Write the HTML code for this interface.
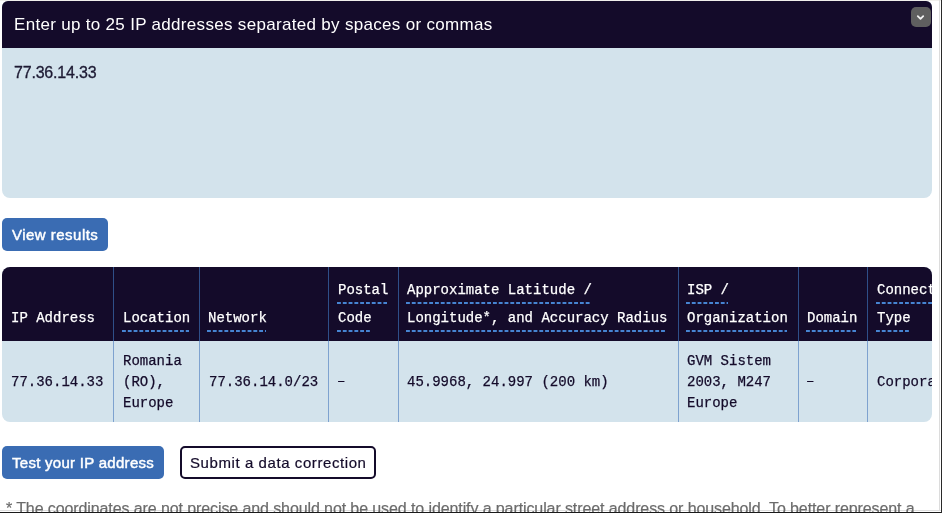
<!DOCTYPE html>
<html><head><meta charset="utf-8">
<style>
html,body{margin:0;padding:0;background:#fff;width:942px;height:513px;overflow:hidden;position:relative;}
body{font-family:"Liberation Sans",sans-serif;-webkit-font-smoothing:antialiased;}
.abs{position:absolute;}
#topline{left:0;top:0;width:942px;height:1px;background:#f0efeb;}
#rline1{z-index:3;left:939px;top:0;width:1px;height:511px;background:#dcdcdc;}
#rline2{z-index:3;left:941px;top:0;width:1px;height:513px;background:#2a2a2a;}
#bline1{left:0;top:510px;width:942px;height:1px;background:#dedede;}
#bline2{z-index:3;left:0;top:512px;width:942px;height:1px;background:#1a1a1a;}

#panel{left:2px;top:1px;width:930px;height:197px;border-radius:6px 6px 8px 8px;overflow:hidden;background:#d3e3ec;}
#phead{left:0;top:0;width:930px;height:47px;background:#140b2a;}
#phead .t{position:absolute;left:12px;top:14px;font-size:17px;letter-spacing:0.31px;line-height:20px;color:#fff;white-space:nowrap;}
#chev{left:909px;top:6px;width:20px;height:20px;border-radius:5px;background:#5f5f5f;}
#ptext{left:12px;top:62px;font-size:16px;letter-spacing:-0.2px;-webkit-text-stroke:0.3px currentColor;line-height:20px;color:#1d1a33;white-space:nowrap;}

.btn{position:absolute;height:33px;border-radius:5px;background:#3a6cb3;color:#fff;font-size:15px;line-height:33px;white-space:nowrap;box-sizing:border-box;}
#b1{left:2px;top:218px;width:106px;letter-spacing:0.48px;}
#b2{left:2px;top:446px;width:162px;letter-spacing:0.28px;}
#b3{left:180px;top:446px;width:196px;height:33px;letter-spacing:0.58px;background:#fff;border:2px solid #140b2a;color:#140b2a;border-radius:5px;}
.btn span{position:absolute;left:10px;top:0;-webkit-text-stroke:0.45px currentColor;}

#tbl{left:2px;top:267px;width:930px;height:155px;border-radius:8px;overflow:hidden;background:#d3e3ec;}
#thead{left:0;top:0;width:930px;height:74px;background:#140b2a;}
.vl{position:absolute;top:0;width:1px;height:155px;}
.vl .h{position:absolute;left:0;top:0;width:1px;height:74px;background:#2f4f88;}
.vl .b{position:absolute;left:0;top:74px;width:1px;height:81px;background:#7ea2cf;}
.m{position:absolute;font-family:"Liberation Mono",monospace;font-size:14px;white-space:nowrap;-webkit-text-stroke:0.25px currentColor;}
.hd{color:#fff;line-height:28px;}
.hd u{text-decoration:none;position:relative;}
.hd u::after{content:'';position:absolute;left:-1px;right:1px;top:20px;height:2px;background-image:linear-gradient(90deg,#4684d2 60%,transparent 60%);background-size:5.8px 2px;background-repeat:repeat-x;}
.bd{color:#140b2a;line-height:21px;}
#foot{left:6px;top:499px;font-size:16px;letter-spacing:-0.1px;-webkit-text-stroke:0.2px currentColor;z-index:2;line-height:20px;color:#6b6b6b;white-space:nowrap;}
</style></head>
<body><div style="position:absolute;left:0;top:0;width:942px;height:513px;will-change:transform">
<div id="panel" class="abs">
  <div id="phead" class="abs"><div class="t">Enter up to 25 IP addresses separated by spaces or commas</div>
  <div id="chev" class="abs"><svg width="20" height="20" viewBox="0 0 20 20"><path d="M6.8 9.1 L9.5 11.8 L12.2 9.1" fill="none" stroke="#f2f2f2" stroke-width="1.8" stroke-linecap="round" stroke-linejoin="round"/></svg></div>
  </div>
  <div id="ptext" class="abs">77.36.14.33</div>
</div>

<div id="b1" class="btn"><span>View results</span></div>

<div id="tbl" class="abs">
  <div id="thead" class="abs"></div>
  <div class="vl" style="left:111px"><div class="h"></div><div class="b"></div></div>
  <div class="vl" style="left:197px"><div class="h"></div><div class="b"></div></div>
  <div class="vl" style="left:326px"><div class="h"></div><div class="b"></div></div>
  <div class="vl" style="left:396px"><div class="h"></div><div class="b"></div></div>
  <div class="vl" style="left:676px"><div class="h"></div><div class="b"></div></div>
  <div class="vl" style="left:796px"><div class="h"></div><div class="b"></div></div>
  <div class="vl" style="left:865px"><div class="h"></div><div class="b"></div></div>

  <div class="m hd" style="left:9px;top:37px">IP Address</div>
  <div class="m hd" style="left:121px;top:37px"><u>Location</u></div>
  <div class="m hd" style="left:206px;top:37px"><u>Network</u></div>
  <div class="m hd" style="left:336px;top:9px"><u>Postal</u><br><u>Code</u></div>
  <div class="m hd" style="left:405px;top:9px"><u>Approximate Latitude /</u><br><u>Longitude*, and Accuracy Radius</u></div>
  <div class="m hd" style="left:685px;top:9px"><u>ISP /</u><br><u>Organization</u></div>
  <div class="m hd" style="left:805px;top:37px"><u>Domain</u></div>
  <div class="m hd" style="left:875px;top:9px"><u>Connection</u><br><u>Type</u></div>

  <div class="m bd" style="left:9px;top:105px">77.36.14.33</div>
  <div class="m bd" style="left:121px;top:84px">Romania<br>(RO),<br>Europe</div>
  <div class="m bd" style="left:207px;top:105px">77.36.14.0/23</div>
  <div class="m bd" style="left:335px;top:104px">–</div>
  <div class="m bd" style="left:405px;top:105px">45.9968, 24.997 (200 km)</div>
  <div class="m bd" style="left:685px;top:84px">GVM Sistem<br>2003, M247<br>Europe</div>
  <div class="m bd" style="left:804px;top:104px">–</div>
  <div class="m bd" style="left:875px;top:105px">Corporate</div>
</div>

<div id="b2" class="btn"><span>Test your IP address</span></div>
<div id="b3" class="btn"><span style="left:8px;top:-2px;-webkit-text-stroke:0.2px currentColor">Submit a data correction</span></div>

<div id="foot" class="abs">* The coordinates are not precise and should not be used to identify a particular street address or household. To better represent a</div>

<div id="topline" class="abs"></div>
<div id="bline1" class="abs"></div>
<div id="bline2" class="abs"></div>
<div id="rline1" class="abs"></div>
<div id="rline2" class="abs"></div>
</div></body></html>
